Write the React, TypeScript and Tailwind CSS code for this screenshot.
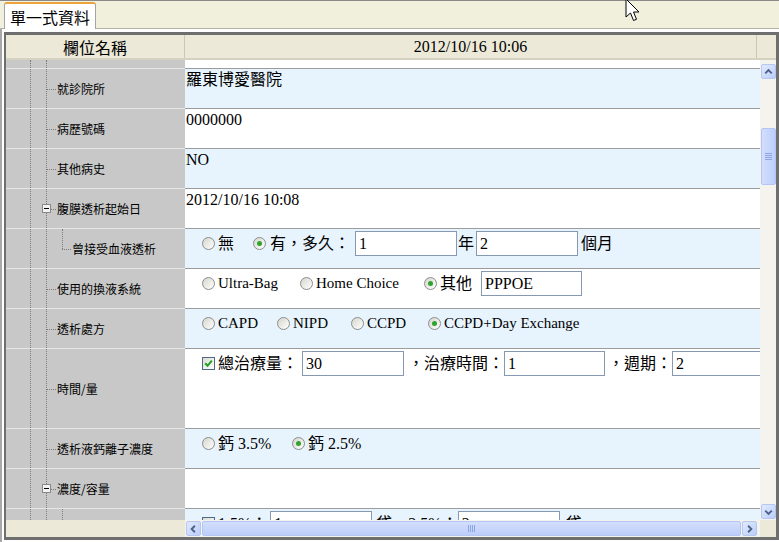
import React from 'react';

type Kind = 'leaf' | 'parent' | 'child' | 'childTop' | 'none';

const DOT = 'border-dotted border-[#7a7a7a]';
const BLUE = 'bg-[#e7f4fd]';
const WHITE = 'bg-white';

function TreeCell({ label, kind, hClass }: { label: string; kind: Kind; hClass: string }) {
  return (
    <div className={`relative w-[179px] shrink-0 bg-[#c8c8c8] ${kind === 'none' ? '' : 'border-t border-[#e6e6e6]'} ${hClass}`}>
      <div className={`absolute left-[24px] top-0 bottom-0 border-l ${DOT}`} />
      <div className={`absolute left-[40px] top-0 bottom-0 border-l ${DOT}`} />
      {kind === 'leaf' && <div className={`absolute left-[40px] top-1/2 w-[10px] border-t ${DOT}`} />}
      {kind === 'parent' && (
        <>
          <div className={`absolute left-[45px] top-1/2 w-[5px] border-t ${DOT}`} />
          <div className="absolute left-[36px] top-1/2 -mt-[5px] w-[9px] h-[9px] border border-[#8a8a8a] bg-[#f2f2f2] flex items-center justify-center">
            <div className="w-[5px] h-px bg-black" />
          </div>
        </>
      )}
      {kind === 'child' && (
        <>
          <div className={`absolute left-[56px] top-0 h-1/2 border-l ${DOT}`} />
          <div className={`absolute left-[56px] top-1/2 w-[9px] border-t ${DOT}`} />
        </>
      )}
      {kind === 'childTop' && <div className={`absolute left-[56px] top-0 bottom-0 border-l ${DOT}`} />}
      {label && (
        <div
          className={`absolute top-0 bottom-0 flex items-center whitespace-nowrap text-[12px] font-['Noto_Sans_CJK_TC',sans-serif] ${
            kind === 'child' ? 'left-[66px]' : 'left-[51px]'
          }`}
        >
          {label}
        </div>
      )}
    </div>
  );
}

function Radio({ on }: { on?: boolean }) {
  return (
    <span className="w-[13px] h-[13px] shrink-0 rounded-full border border-[#8c8c8c] bg-linear-to-br from-[#d6d6ce] to-white flex items-center justify-center">
      {on && <span className="w-[5px] h-[5px] rounded-full bg-[#2ea32e]" />}
    </span>
  );
}

function Check({ on }: { on?: boolean }) {
  return (
    <span className="w-[13px] h-[13px] shrink-0 border border-[#4a6a88] bg-linear-to-br from-[#dcdcd4] to-white flex items-center justify-center">
      {on && (
        <svg width="9" height="9" viewBox="0 0 9 9">
          <path d="M1.2 4.2 L3.6 6.8 L7.8 1.6" stroke="#21a121" strokeWidth="2" fill="none" />
        </svg>
      )}
    </span>
  );
}

function Field({ v, w = 'w-[102px]' }: { v: string; w?: string }) {
  return (
    <div className={`h-[25px] shrink-0 border border-[#8799b0] bg-white pl-[3px] text-[16px] leading-[23px] ${w}`}>
      {v}
    </div>
  );
}

function Opt({ on, label, w, latin }: { on?: boolean; label: string; w: string; latin?: boolean }) {
  return (
    <div className={`flex items-center shrink-0 ${w}`}>
      <Radio on={on} />
      <span className={`ml-[3px] ${latin ? 'text-[15px]' : 'text-[16px]'}`}>{label}</span>
    </div>
  );
}

function Controls({ children }: { children: React.ReactNode }) {
  return (
    <div className="mt-[2px] h-[25px] pl-[17px] flex items-center whitespace-nowrap text-[16px]">{children}</div>
  );
}

function Text({ v }: { v: string }) {
  return <div className="pl-[1px] pt-[1px] text-[16px] leading-[20px] whitespace-nowrap">{v}</div>;
}

type Row = { label: string; kind: Kind; bg: string; hClass: string; body: React.ReactNode };

const rows: Row[] = [
  { label: '就診院所', kind: 'leaf', bg: BLUE, hClass: 'h-[40px]', body: <Text v="羅東博愛醫院" /> },
  { label: '病歷號碼', kind: 'leaf', bg: WHITE, hClass: 'h-[40px]', body: <Text v="0000000" /> },
  { label: '其他病史', kind: 'leaf', bg: BLUE, hClass: 'h-[40px]', body: <Text v="NO" /> },
  { label: '腹膜透析起始日', kind: 'parent', bg: WHITE, hClass: 'h-[40px]', body: <Text v="2012/10/16 10:08" /> },
  {
    label: '曾接受血液透析',
    kind: 'child',
    bg: BLUE,
    hClass: 'h-[40px]',
    body: (
      <Controls>
        <Opt label="無" w="w-[51px]" />
        <Radio on />
        <span className="ml-[4px]">有，多久：</span>
        <div className="ml-[5px]">
          <Field v="1" />
        </div>
        <span className="ml-[1px]">年</span>
        <div className="ml-[2px]">
          <Field v="2" />
        </div>
        <span className="ml-[3px]">個月</span>
      </Controls>
    ),
  },
  {
    label: '使用的換液系統',
    kind: 'leaf',
    bg: WHITE,
    hClass: 'h-[40px]',
    body: (
      <Controls>
        <Opt label="Ultra-Bag" w="w-[98px]" latin />
        <Opt label="Home Choice" w="w-[124px]" latin />
        <Opt on label="其他" w="w-[57px]" />
        <Field v="PPPOE" w="w-[101px]" />
      </Controls>
    ),
  },
  {
    label: '透析處方',
    kind: 'leaf',
    bg: BLUE,
    hClass: 'h-[40px]',
    body: (
      <Controls>
        <Opt label="CAPD" w="w-[75px]" latin />
        <Opt label="NIPD" w="w-[74px]" latin />
        <Opt label="CCPD" w="w-[77px]" latin />
        <Opt on label="CCPD+Day Exchange" w="w-[160px]" latin />
      </Controls>
    ),
  },
  {
    label: '時間/量',
    kind: 'leaf',
    bg: WHITE,
    hClass: 'h-[80px]',
    body: (
      <Controls>
        <Check on />
        <span className="ml-[3px]">總治療量：</span>
        <div className="ml-[4px]">
          <Field v="30" />
        </div>
        <span className="ml-[4px]">，治療時間：</span>
        <Field v="1" w="w-[101px]" />
        <span className="ml-[3px]">，週期：</span>
        <Field v="2" />
      </Controls>
    ),
  },
  {
    label: '透析液鈣離子濃度',
    kind: 'leaf',
    bg: BLUE,
    hClass: 'h-[40px]',
    body: (
      <Controls>
        <Opt label="鈣 3.5%" w="w-[90px]" />
        <Opt on label="鈣 2.5%" w="w-[90px]" />
      </Controls>
    ),
  },
  { label: '濃度/容量', kind: 'parent', bg: WHITE, hClass: 'h-[40px]', body: null },
  {
    label: '',
    kind: 'childTop',
    bg: BLUE,
    hClass: 'h-[40px]',
    body: (
      <Controls>
        <Check />
        <span className="ml-[3px]">1.5%：</span>
        <div className="ml-[3px]">
          <Field v="1" />
        </div>
        <span className="ml-[4px]">袋，2.5%：</span>
        <Field v="2" />
        <span className="ml-[6px]">袋</span>
      </Controls>
    ),
  },
];

function SBtn({ dir }: { dir: 'up' | 'down' | 'left' | 'right' }) {
  const d = {
    up: 'M3.5 8.5 L7 5 L10.5 8.5',
    down: 'M3.5 5.5 L7 9 L10.5 5.5',
    left: 'M8.5 3.5 L5 7 L8.5 10.5',
    right: 'M5.5 3.5 L9 7 L5.5 10.5',
  }[dir];
  return (
    <div className="w-[15px] h-[15px] shrink-0 rounded-[2px] border border-[#b4c6f2] bg-linear-to-br from-[#e2eafe] to-[#bacdf9] flex items-center justify-center">
      <svg width="14" height="14" viewBox="0 0 14 14">
        <path d={d} stroke="#4d6185" strokeWidth="2" fill="none" />
      </svg>
    </div>
  );
}

function VScroll() {
  return (
    <div className="w-[16px] h-full bg-[#f4f3ee] flex flex-col items-center">
      <div className="mt-[4px]">
        <SBtn dir="up" />
      </div>
      <div className="mt-[49px] w-[15px] h-[57px] rounded-[2px] border border-[#b2c5f4] bg-linear-to-r from-[#d3defd] to-[#bccefa] flex flex-col items-center justify-center gap-px">
        <span className="w-[7px] h-px bg-[#8da5e3]" />
        <span className="w-[7px] h-px bg-[#8da5e3]" />
        <span className="w-[7px] h-px bg-[#8da5e3]" />
        <span className="w-[7px] h-px bg-[#8da5e3]" />
      </div>
      <div className="flex-1" />
      <div className="mb-[1px]">
        <SBtn dir="down" />
      </div>
    </div>
  );
}

function HScroll() {
  return (
    <div className="h-[17px] flex">
      <div className="w-[179px] bg-[#ece9d8]" />
      <div className="w-[575px] bg-[#f4f3ee] flex items-center pl-[1px] pr-[3px] gap-px">
        <SBtn dir="left" />
        <div className="flex-1 h-[15px] rounded-[2px] border border-[#b2c5f4] bg-linear-to-b from-[#d3defd] to-[#bccefa] flex items-center justify-center gap-px">
          <span className="w-px h-[7px] bg-[#8da5e3]" />
          <span className="w-px h-[7px] bg-[#8da5e3]" />
          <span className="w-px h-[7px] bg-[#8da5e3]" />
          <span className="w-px h-[7px] bg-[#8da5e3]" />
        </div>
        <SBtn dir="right" />
      </div>
      <div className="flex-1 bg-[#ece9d8]" />
    </div>
  );
}

export default function App() {
  return (
    <div className="relative w-[779px] h-[542px] overflow-hidden bg-white text-black font-['Liberation_Serif','Noto_Sans_CJK_TC',serif]">
      {/* tab strip */}
      <div className="h-[29px] bg-[#f0f0dc] border-t border-b border-t-[#8a8a8a] border-b-[#b4b4a8] flex items-end pl-[4px]">
        <div className="-mb-px h-[27px] w-[92px] bg-white border-x border-[#a4a4a4] border-t-2 border-t-[#eba33a] rounded-t-[3px] flex items-center pl-[5px] text-[16px] font-['Noto_Sans_CJK_TC',sans-serif]">
          單一式資料
        </div>
      </div>

      <div className="h-[513px] border-l-2 border-[#a8a8a8] pl-[2px] pt-[3px]">
        <div className="w-[775px] h-[508px] border-l-2 border-r-[3px] border-y-[3px] border-[#6e6e6e] flex flex-col">
          {/* header */}
          <div className="h-[25px] shrink-0 flex bg-[#ece9d8] border-b-2 border-[#d6d2c2] text-[16px]">
            <div className="w-[179px] flex items-center justify-center border-r border-[#cbc7b8] font-['Noto_Sans_CJK_TC',sans-serif]">
              欄位名稱
            </div>
            <div className="w-[572px] flex items-center justify-center border-r border-[#cbc7b8]">2012/10/16 10:06</div>
            <div className="flex-1" />
          </div>

          {/* body */}
          <div className="h-[460px] shrink-0 flex">
            <div className="w-[754px] h-full overflow-hidden flex flex-col">
              <div className="flex shrink-0">
                <TreeCell label="" kind="none" hClass="h-[8px]" />
                <div className="w-[575px] h-[8px] bg-white" />
              </div>
              {rows.map((r, i) => (
                <div key={i} className="flex shrink-0">
                  <TreeCell label={r.label} kind={r.kind} hClass={r.hClass} />
                  <div className={`w-[575px] shrink-0 overflow-hidden border-t border-[#9c9c9c] ${r.bg} ${r.hClass}`}>
                    {r.body}
                  </div>
                </div>
              ))}
            </div>
            <VScroll />
          </div>

          <HScroll />
        </div>
      </div>

      {/* mouse pointer */}
      <svg className="absolute left-[625px] top-[-2px]" width="16" height="26" viewBox="0 0 16 26">
        <path d="M1 1 L1 19 L5.5 15 L8.5 22.5 L11.5 21.3 L8.5 14 L14 14 Z" fill="white" stroke="black" strokeWidth="1" />
      </svg>
    </div>
  );
}
